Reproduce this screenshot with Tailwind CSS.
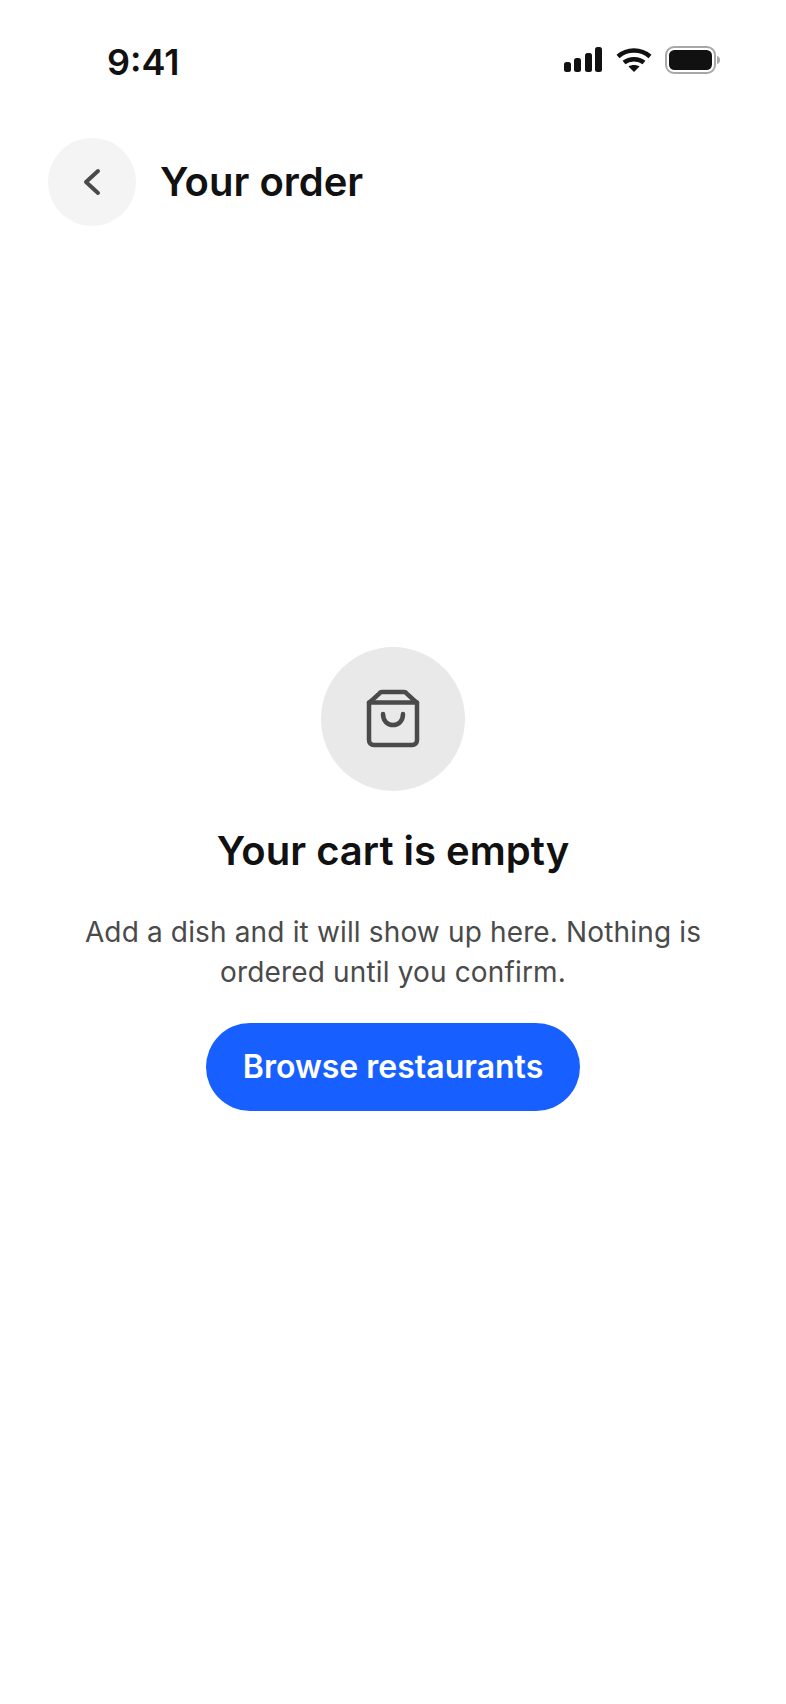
<!DOCTYPE html>
<html lang="en">
<head>
  <meta charset="UTF-8">
  <meta name="viewport" content="width=device-width, initial-scale=1.0">
  <title>Your order</title>
  <script src="https://cdn.jsdelivr.net/npm/@tailwindcss/browser@4"></script>
</head>
<body class="bg-white font-[Inter,sans-serif] text-[#111111]">
  <div class="flex flex-col w-[786px] h-[1704px] overflow-hidden">
    <!-- Status bar -->
    <div class="flex justify-between items-center h-[60px] mt-[32px] pl-[107px] pr-[66px] shrink-0">
      <span class="text-[36px] leading-[50px] font-semibold">9:41</span>
      <div class="flex items-center gap-[13px] mb-[4px]">
        <svg width="40" height="26" viewBox="0 0 40 26" fill="#111111">
          <rect x="1" y="15" width="7" height="10" rx="2.5"/>
          <rect x="11" y="11" width="7" height="14" rx="2.5"/>
          <rect x="22" y="6" width="7" height="19" rx="2.5"/>
          <rect x="32" y="0" width="7" height="25" rx="2.5"/>
        </svg>
        <svg width="36" height="26" viewBox="0 0 36 26" fill="none" stroke="#111111" stroke-width="4.5">
          <path d="M2 9.5C11 1.5 25 1.5 34 9.5"/>
          <path d="M8 15.5C13.500 11 22.500 11 28 15.500"/>
          <path d="M18 25L12.500 19.500C15.500 17.500 20.500 17.500 23.500 19.500Z" fill="#111111" stroke="none"/>
        </svg>
        <svg width="55" height="28" viewBox="-1 0 55 28" fill="none">
          <rect x="0" y="1" width="49" height="26" rx="8" stroke="#a8a8a8" stroke-width="2"/>
          <rect x="3" y="4" width="43" height="20" rx="5.500" fill="#111111"/>
          <path d="M51 10C53 10.500 54 12 54 14C54 16 53 17.500 51 18Z" fill="#a8a8a8"/>
        </svg>
      </div>
    </div>

    <!-- Header -->
    <div class="flex items-center gap-[24px] ml-[48px] mt-[46px] shrink-0">
      <button class="flex justify-center items-center w-[88px] h-[88px] rounded-full bg-[#f4f4f4]">
        <svg width="40" height="40" viewBox="0 0 40 40" fill="none" stroke="#4a4a4a" stroke-width="4" stroke-linecap="round" stroke-linejoin="round">
          <path d="M26 9L14 20L26 31"/>
        </svg>
      </button>
      <h1 class="text-[40px] leading-[48px] font-semibold">Your order</h1>
    </div>

    <!-- Empty state -->
    <div class="flex flex-col items-center mt-[421px]">
      <div class="flex justify-center items-center w-[144px] h-[144px] rounded-full bg-[#e9e9e9]">
        <svg width="56" height="60" viewBox="0 0 56 60" fill="none" stroke="#4a4a4a" stroke-width="4.500" stroke-linecap="round" stroke-linejoin="round">
          <path d="M17 3H39C40 3 41 3.500 41.500 4.300L52 14V51C52 54 50 56 47 56H9C6 56 4 54 4 51V14L14.500 4.300C15 3.500 16 3 17 3Z"/>
          <path d="M4 13.500H52"/>
          <path d="M18 25C18 39.700 38 39.700 38 25"/>
        </svg>
      </div>
      <h2 class="mt-[32px] text-[40px] leading-[56px] font-semibold">Your cart is empty</h2>
      <p class="mt-[33px] w-[640px] text-center text-[28px] leading-[40px] tracking-[0.15px] text-[#4a4a4a]">Add a dish and it will show up here. Nothing is ordered until you confirm.</p>
      <button class="flex justify-center items-center mt-[31px] w-[374px] h-[88px] rounded-full bg-[#1760ff] text-white text-[32px] font-semibold">Browse restaurants</button>
    </div>
  </div>
</body>
</html>
